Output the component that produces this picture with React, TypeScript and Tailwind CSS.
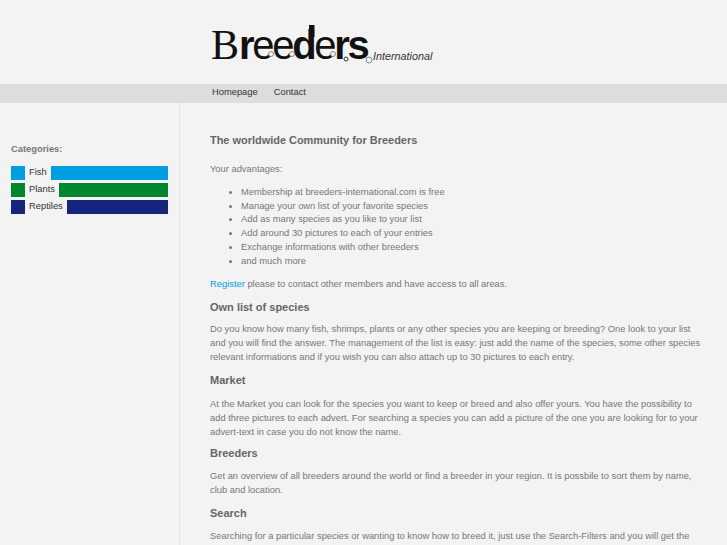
const categories = [
  { name: "Fish", color: "bg-[#009ee0]" },
  { name: "Plants", color: "bg-[#00862f]" },
  { name: "Reptiles", color: "bg-[#16267f]" },
];

const advantages = [
  "Membership at breeders-international.com is free",
  "Manage your own list of your favorite species",
  "Add as many species as you like to your list",
  "Add around 30 pictures to each of your entries",
  "Exchange informations with other breeders",
  "and much more",
];

function Logo() {
  return (
    <div className="relative h-[40px] w-[225px] text-[#111]">
      <span className="absolute left-0 top-[-3px] font-['Liberation_Serif',serif] text-[42px] leading-[46px]">B</span>
      <span className="absolute left-[28px] top-[-3px] text-[40px] leading-[46px] tracking-[-2.3px]">
        <b>r</b>ee<b>d</b>e<b>rs</b>
      </span>
      <span className="absolute left-[162px] top-[24px] text-[10.8px] italic leading-[14px] text-[#333]">International</span>
      <svg className="absolute left-0 top-0" width="225" height="40" viewBox="0 0 225 40" fill="#f3f3f3" stroke="#888">
        <circle cx="60" cy="29" r="2.5" />
        <circle cx="81" cy="29" r="2.5" />
        <circle cx="122" cy="29" r="2.5" />
        <circle cx="135" cy="34" r="2" stroke="#333" />
        <circle cx="158" cy="35" r="3" />
        <rect x="98" y="0" width="5.5" height="12" fill="#111" stroke="none" />
      </svg>
    </div>
  );
}

export default function App() {
  return (
    <div className="h-[545px] overflow-hidden bg-[#f3f3f3] font-['Liberation_Sans',sans-serif] text-[9.35px] leading-[13.8px] text-[#777]">
      <header className="h-[84px] pl-[211px] pt-[25px]">
        <Logo />
      </header>
      <nav className="flex h-[19px] items-center gap-[16px] bg-[#dddddd] pb-[1px] pl-[212px] text-[#333]">
        <a>Homepage</a>
        <a>Contact</a>
      </nav>
      <div className="flex">
        <aside className="h-[442px] w-[180px] shrink-0 border-r border-[#e2e2e2] pl-[11px] pr-[11px] pt-[40px]">
          <h3 className="font-bold text-[#777]">Categories:</h3>
          <ul className="mt-[9px] flex flex-col gap-[3px]">
            {categories.map((c) => (
              <li key={c.name} className="flex h-[14px] items-center text-[#333]">
                <span className={`h-[14px] w-[14px] shrink-0 ${c.color}`} />
                <span className="px-[4px]">{c.name}</span>
                <span className={`h-[14px] flex-1 ${c.color}`} />
              </li>
            ))}
          </ul>
        </aside>
        <main className="w-[522px] pl-[30px] pt-[31px] [&_h2]:text-[11px] [&_h2]:font-bold [&_h2]:text-[#666] [&_p]:leading-[14px]">
          <h1 className="text-[10.95px] font-bold text-[#666]">The worldwide Community for Breeders</h1>
          <p className="mt-[14px]">Your advantages:</p>
          <ul className="mt-[10px] list-disc pl-[31px]">
            {advantages.map((a) => (
              <li key={a}>{a}</li>
            ))}
          </ul>
          <p className="mt-[8px]"><a className="text-[#009ee0]">Register</a> please to contact other members and have access to all areas.</p>
          <h2 className="mb-[8px] mt-[10px]">Own list of species</h2>
          <p>Do you know how many fish, shrimps, plants or any other species you are keeping or breeding? One look to your list and you will find the answer. The management of the list is easy: just add the name of the species, some other species relevant informations and if you wish you can also attach up to 30 pictures to each entry.</p>
          <h2 className="mb-[9px] mt-[10px]">Market</h2>
          <p>At the Market you can look for the species you want to keep or breed and also offer yours. You have the possibility to add three pictures to each advert. For searching a species you can add a picture of the one you are looking for to your advert-text in case you do not know the name.</p>
          <h2 className="mb-[8px] mt-[8px]">Breeders</h2>
          <p>Get an overview of all breeders around the world or find a breeder in your region. It is possbile to sort them by name, club and location.</p>
          <h2 className="mb-[8px] mt-[10px]">Search</h2>
          <p>Searching for a particular species or wanting to know how to breed it, just use the Search-Filters and you will get the</p>
        </main>
      </div>
    </div>
  );
}
